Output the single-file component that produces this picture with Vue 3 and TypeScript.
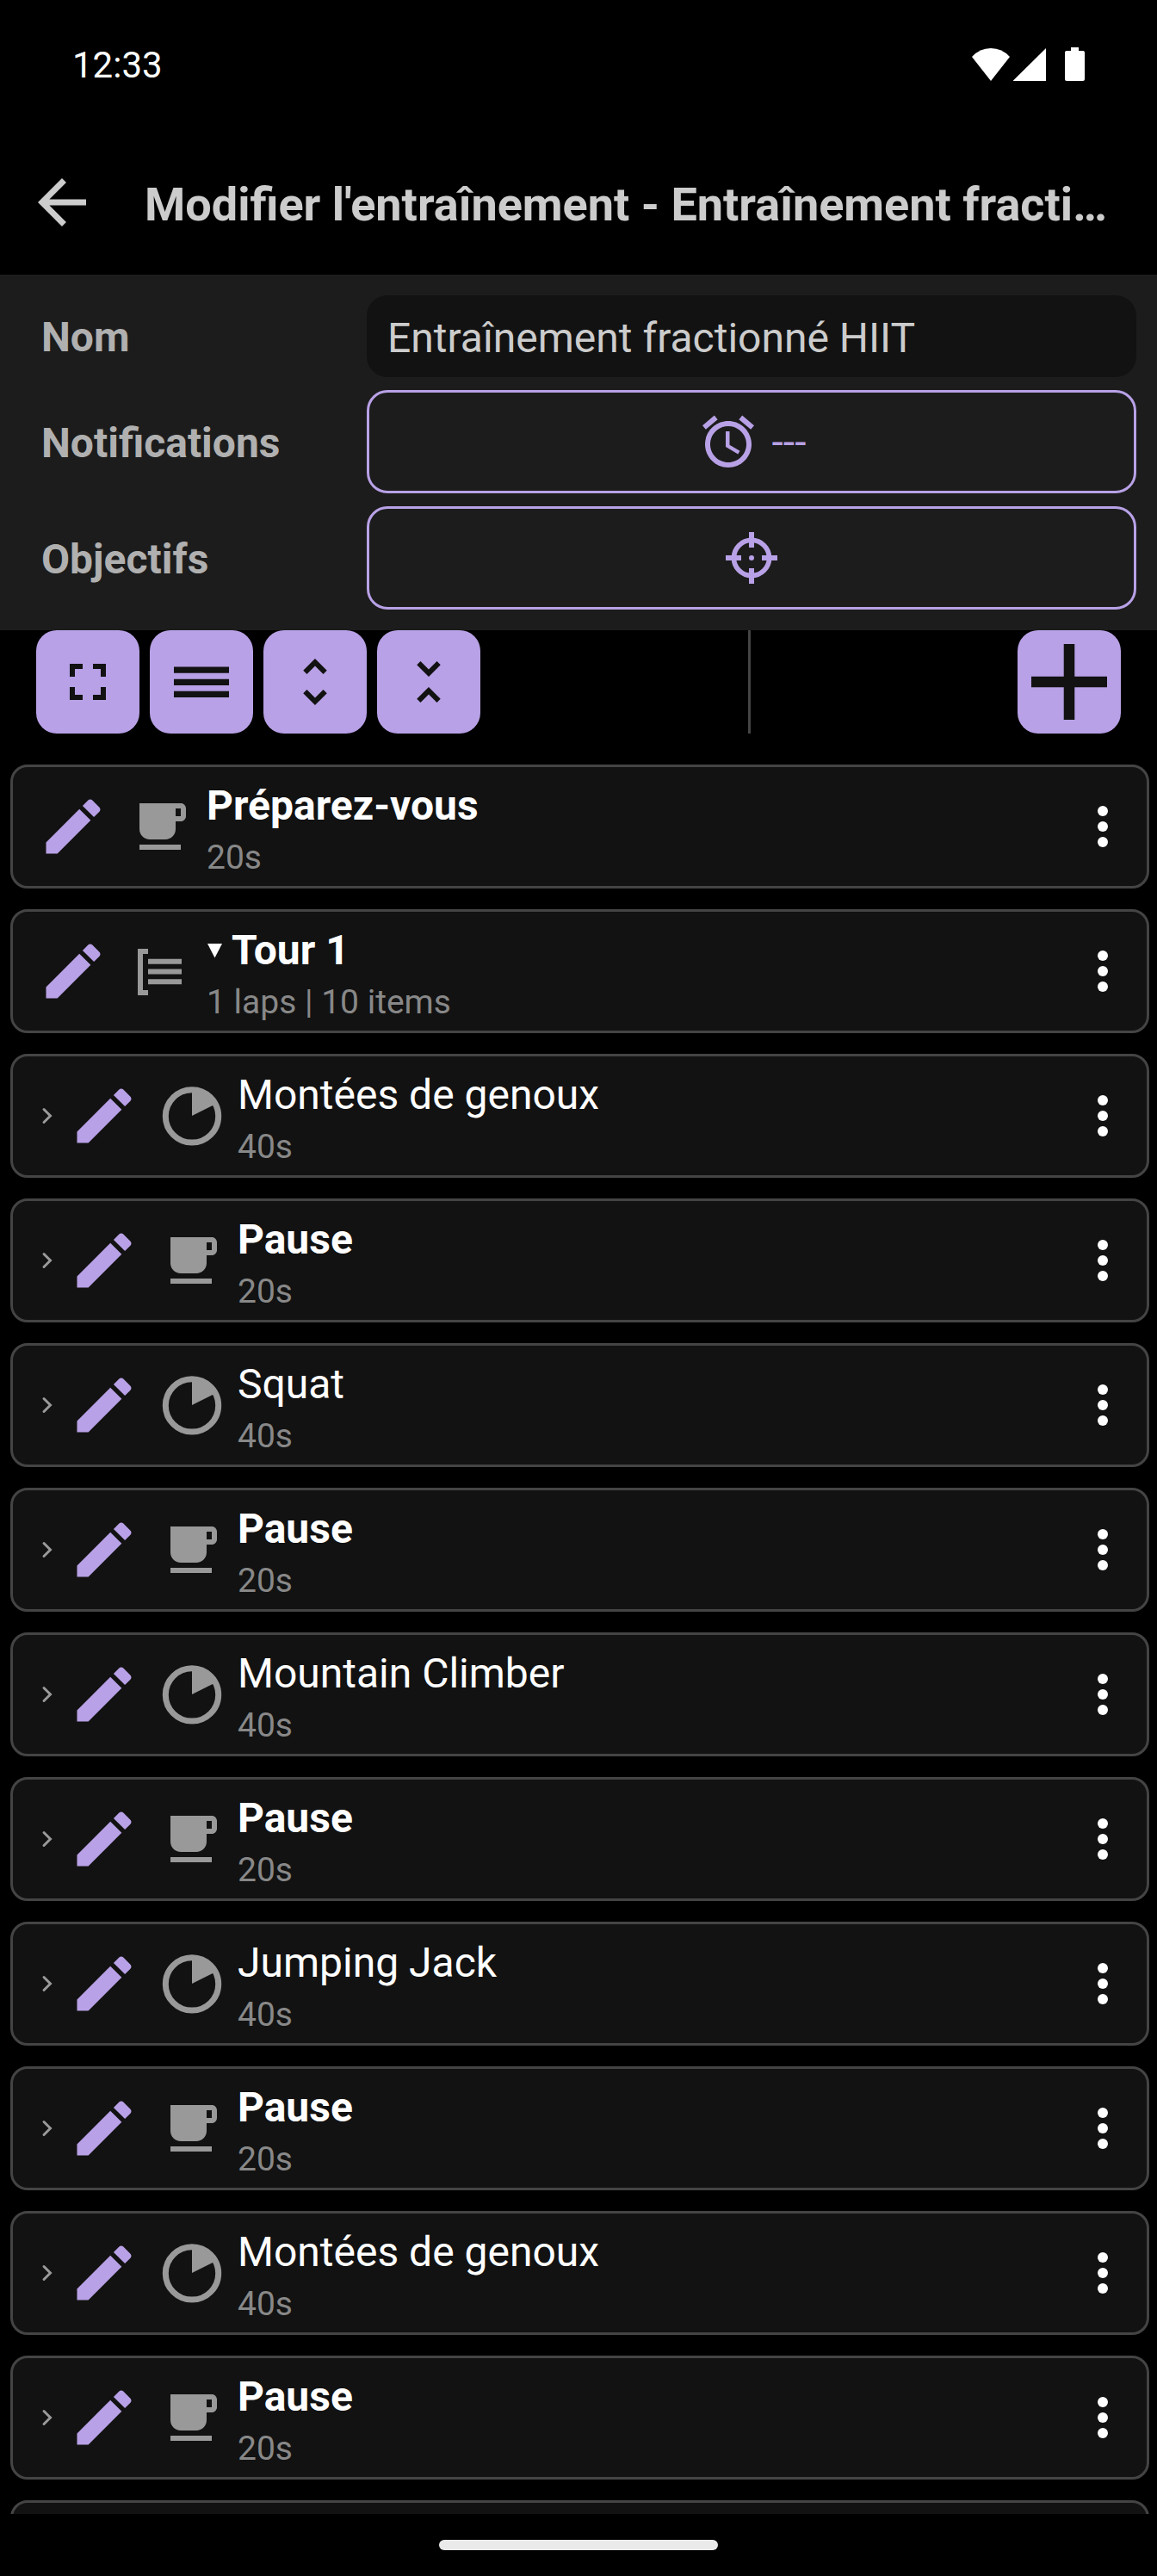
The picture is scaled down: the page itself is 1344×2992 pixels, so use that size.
<script setup lang="ts">
import { ref } from 'vue'

type Kind = 'rest' | 'lap' | 'work'

interface Step {
  id: number
  kind: Kind
  title: string
  detail: string
  nested: boolean
}

const name = ref('Entraînement fractionné HIIT')

const lapSteps: [Kind, string][] = [
  ['work', 'Montées de genoux'],
  ['rest', 'Pause'],
  ['work', 'Squat'],
  ['rest', 'Pause'],
  ['work', 'Mountain Climber'],
  ['rest', 'Pause'],
  ['work', 'Jumping Jack'],
  ['rest', 'Pause'],
  ['work', 'Montées de genoux'],
  ['rest', 'Pause'],
]

const steps: Step[] = [
  { id: 1, kind: 'rest', title: 'Préparez-vous', detail: '20s', nested: false },
  { id: 2, kind: 'lap', title: 'Tour 1', detail: '1 laps | 10 items', nested: false },
  ...lapSteps.map(([kind, title], i): Step => ({
    id: i + 3,
    kind,
    title,
    detail: kind === 'work' ? '40s' : '20s',
    nested: true,
  })),
]

const tools = [
  { label: 'Plein écran', path: 'M5 10h2V7h3V5H5v5zm0 4v5h5v-2H7v-3H5zm12 3h-3v2h5v-5h-2v3zM14 5v2h3v3h2V5h-5z' },
  { label: 'Liste', path: 'M1.33 6.2h21.34v2.4H1.33zM1.33 10.9h21.34v2.4H1.33zM1.33 15.6h21.34v2.4H1.33z' },
  { label: 'Tout déplier', path: 'M12 5.83L15.17 9l1.41-1.41L12 3 7.41 7.59 8.83 9 12 5.83zm0 12.34L8.83 15l-1.42 1.41L12 21l4.59-4.59L15.17 15 12 18.17z' },
  { label: 'Tout replier', path: 'M7.41 18.59L8.83 20 12 16.83 15.17 20l1.41-1.41L12 14l-4.59 4.59zm9.18-13.18L15.17 4 12 7.17 8.83 4 7.41 5.41 12 10l4.59-4.59z' },
]
</script>

<template>
  <div class="screen">
    <div class="status">
      <span class="clock">12:33</span>
      <svg class="status-icons" viewBox="0 0 132 40" aria-hidden="true">
        <path d="M23 39L1 11Q10 1 23 1t22 10z" />
        <path d="M49 39V38.500L87 1v38z" />
        <path d="M116 0h9v4h5q2 0 2 2v31q0 2-2 2h-19q-2 0-2-2V6q0-2 2-2h5z" />
      </svg>
    </div>

    <header class="bar">
      <button class="plain" type="button" aria-label="Retour">
        <svg class="i84" viewBox="0 0 24 24"><path d="M20 11H7.83l5.59-5.59L12 4l-8 8 8 8 1.41-1.41L7.83 13H20v-2z" /></svg>
      </button>
      <h1>Modifier l'entraînement - Entraînement fractionné HIIT</h1>
    </header>

    <form class="form" @submit.prevent>
      <label for="name">Nom</label>
      <input id="name" v-model="name" type="text" />

      <label for="notifications">Notifications</label>
      <button id="notifications" class="outlined" type="button">
        <svg class="i72" viewBox="0 0 24 24"><path d="M22 5.72l-4.6-3.86-1.29 1.53 4.6 3.86L22 5.72zM7.88 3.39L6.6 1.86 2 5.71l1.29 1.53 4.59-3.85zM12.500 8H11v6l4.750 2.850.750-1.230-4-2.370V8zM12 4c-4.970 0-9 4.030-9 9s4.020 9 9 9c4.970 0 9-4.030 9-9s-4.030-9-9-9zm0 16c-3.870 0-7-3.130-7-7s3.130-7 7-7 7 3.130 7 7-3.130 7-7 7z" /></svg>
        <span>---</span>
      </button>

      <label for="goals">Objectifs</label>
      <button id="goals" class="outlined" type="button" aria-label="Objectifs">
        <svg class="i72" viewBox="0 0 24 24">
          <circle cx="12" cy="12" r="6.850" fill="none" stroke="currentColor" stroke-width="1.900" />
          <path d="M11 2h2v6h-2zM11 16h2v6h-2zM2 11h6v2H2zM16 11h6v2h-6z" />
          <circle cx="12" cy="12" r="1" />
        </svg>
      </button>
    </form>

    <div class="toolbar">
      <div class="tools">
        <button v-for="tool in tools" :key="tool.label" class="tool" type="button" :aria-label="tool.label">
          <svg class="i72" viewBox="0 0 24 24"><path :d="tool.path" /></svg>
        </button>
      </div>
      <div class="divider"></div>
      <button class="tool" type="button" aria-label="Ajouter">
        <svg class="i88" viewBox="5 5 14 14"><path d="M19 13h-6v6h-2v-6H5v-2h6V5h2v6h6v2z" /></svg>
      </button>
    </div>

    <ul class="list">
      <li v-for="step in steps" :key="step.id" class="card">
        <svg v-if="step.nested" class="chevron" viewBox="0 0 24 24" aria-hidden="true">
          <path d="M8 4.500l7.500 7.500L8 19.500" />
        </svg>
        <button class="plain edit" type="button" :aria-label="`Modifier ${step.title}`">
          <svg class="i84" viewBox="0 0 24 24"><path d="M3 17.250V21h3.750L17.810 9.940l-3.750-3.750L3 17.250zM20.710 7.040c.390-.390.390-1.020 0-1.410l-2.340-2.340c-.390-.390-1.020-.390-1.410 0l-1.830 1.830 3.750 3.750 1.830-1.830z" /></svg>
        </button>
        <svg v-if="step.kind === 'rest'" class="i72 kind" viewBox="0 0 24 24" aria-hidden="true">
          <path d="M20 3H4v10c0 2.210 1.790 4 4 4h6c2.210 0 4-1.790 4-4v-3h2c1.110 0 2-.890 2-2V5c0-1.110-.890-2-2-2zm0 5h-2V5h2v3zM4 19h16v2H4z" />
        </svg>
        <svg v-else-if="step.kind === 'lap'" class="i72 kind" viewBox="0 0 72 72" aria-hidden="true">
          <path d="M10 10h12v6h-6v42h6v6H10zM22 21.700h39v6H22zM22 33.500h39v6H22zM22 45.300h39v6H22z" />
        </svg>
        <svg v-else class="i72 kind" viewBox="0 0 72 72" aria-hidden="true">
          <circle cx="37" cy="36.400" r="30.700" fill="none" stroke="currentColor" stroke-width="7" />
          <path d="M37 36V7a29 29 0 0 1 26 16z" />
        </svg>
        <div class="text">
          <div class="title" :class="{ strong: step.kind !== 'work' }">
            <svg v-if="step.kind === 'lap'" class="caret" viewBox="0 0 18 18" aria-hidden="true"><path d="M1 1h17L9.500 17.500z" /></svg>
            <span>{{ step.title }}</span>
          </div>
          <div class="detail">{{ step.detail }}</div>
        </div>
        <button class="plain more" type="button" :aria-label="`Options ${step.title}`">
          <svg class="i72" viewBox="0 0 72 72">
            <circle cx="36" cy="18" r="6" />
            <circle cx="36" cy="36" r="6" />
            <circle cx="36" cy="54" r="6" />
          </svg>
        </button>
      </li>
      <li class="card" aria-hidden="true"></li>
    </ul>

    <div class="nav"><div class="handle"></div></div>
  </div>
</template>

<style>
body {
  margin: 0;
  background: #000;
}
</style>

<style scoped>
.screen {
  display: flex;
  flex-direction: column;
  height: 100vh;
  overflow: hidden;
  background: #000;
  color: #fff;
  font-family: Roboto, "Noto Sans", sans-serif;
  font-size: 48px;
}
.screen > * {
  flex: none;
}
* {
  box-sizing: border-box;
}
svg {
  display: block;
  flex: none;
  fill: currentColor;
}
button,
input {
  margin: 0;
  padding: 0;
  border: 0;
  font: inherit;
}
.plain {
  flex: none;
  background: none;
  color: inherit;
}
.i72 {
  width: 72px;
  height: 72px;
}
.i84 {
  width: 84px;
  height: 84px;
}
.i88 {
  width: 88px;
  height: 88px;
}

.status {
  display: flex;
  align-items: center;
  justify-content: space-between;
  height: 150px;
  padding: 0 84px;
}
.clock {
  font-size: 42px;
}
.status-icons {
  width: 132px;
  height: 40px;
}

.bar {
  display: flex;
  align-items: center;
  gap: 54px;
  height: 169px;
  padding: 0 48px 0 30px;
  color: #ccc;
}
h1 {
  flex: 1;
  min-width: 0;
  margin: 0;
  padding-top: 6px;
  overflow: hidden;
  font-size: 54px;
  font-weight: 700;
  line-height: 72px;
  text-overflow: ellipsis;
  white-space: nowrap;
}

.form {
  display: grid;
  grid-template-columns: 378px 1fr;
  grid-template-rows: 95px 120px 120px;
  row-gap: 15px;
  align-items: center;
  padding: 24px 24px 24px 48px;
  background: #1c1c1c;
}
label {
  padding-top: 2px;
  color: #b0b0b0;
  font-weight: 700;
}
input {
  width: 100%;
  height: 100%;
  padding: 4px 24px 0;
  border-radius: 24px;
  outline: 0;
  background: #121212;
  color: #ccc;
}
.outlined {
  display: flex;
  align-items: center;
  justify-content: center;
  gap: 15px;
  height: 100%;
  border: 3px solid #b8a1e6;
  border-radius: 24px;
  background: none;
  color: #b8a1e6;
}

.toolbar {
  display: flex;
  justify-content: space-between;
  padding: 0 42px;
}
.tools {
  display: flex;
  gap: 12px;
}
.tool {
  display: flex;
  align-items: center;
  justify-content: center;
  width: 120px;
  height: 120px;
  border-radius: 24px;
  background: #b8a1e6;
  color: #121212;
}
.divider {
  width: 3px;
  background: #444;
}

.screen > .list {
  display: flex;
  flex: 1;
  flex-direction: column;
  gap: 24px;
  min-height: 0;
  margin: 0;
  padding: 36px 9px 0 12px;
  overflow: hidden;
  list-style: none;
}
.card {
  display: flex;
  flex: none;
  align-items: center;
  height: 144px;
  padding: 0 15px 0 28px;
  border: 3px solid #444;
  border-radius: 20px;
  background: #121212;
}
.chevron {
  width: 24px;
  height: 24px;
  margin-right: 12px;
  fill: none;
  stroke: #999;
  stroke-width: 3;
  stroke-linecap: round;
}
.edit {
  color: #b8a1e6;
}
.kind {
  margin: 0 18px 0 23px;
  color: #999;
}
.text {
  flex: 1;
  align-self: flex-start;
  min-width: 0;
  padding-top: 17px;
}
.title {
  display: flex;
  align-items: center;
  gap: 11px;
  line-height: 56px;
}
.strong {
  font-weight: 700;
}
.caret {
  width: 18px;
  height: 18px;
}
.detail {
  color: #888;
  font-size: 39px;
  line-height: 64px;
}

.nav {
  display: flex;
  align-items: center;
  justify-content: center;
  height: 72px;
}
.handle {
  width: 324px;
  height: 12px;
  border-radius: 6px;
  background: #eaeaea;
}
</style>
